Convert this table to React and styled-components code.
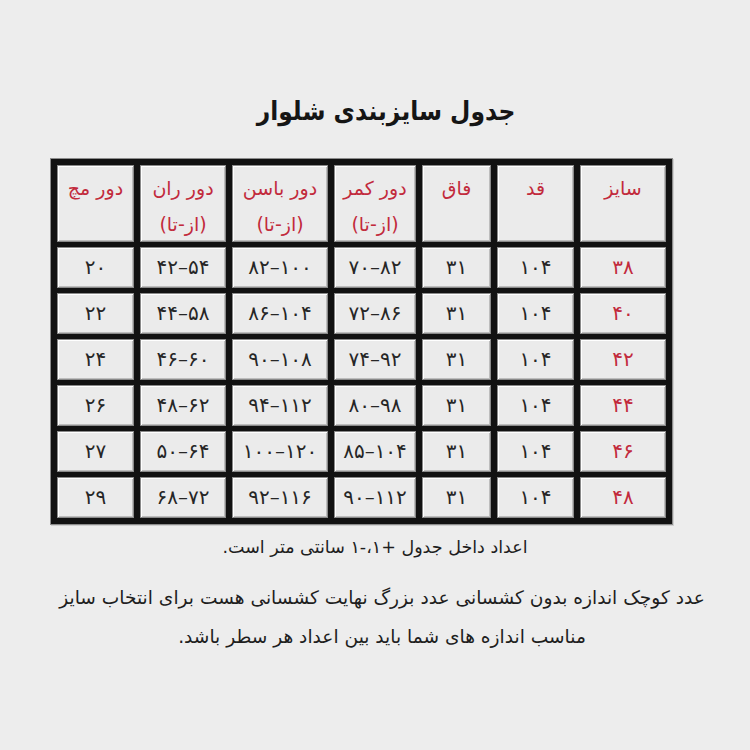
import React from 'react';
import styled, { createGlobalStyle } from 'styled-components';

const GlobalStyle = createGlobalStyle`
  html, body {
    margin: 0;
    padding: 0;
    background: #ededed;
  }
  body {
    font-family: "DejaVu Sans", "Noto Sans", sans-serif;
    color: #1e1e1e;
  }
`;

const headers = [
  { title: 'سایز' },
  { title: 'قد' },
  { title: 'فاق' },
  { title: 'دور کمر', range: true },
  { title: 'دور باسن', range: true },
  { title: 'دور ران', range: true },
  { title: 'دور مچ' },
];

const rows = [
  ['۳۸', '۱۰۴', '۳۱', '۷۰–۸۲', '۸۲–۱۰۰', '۴۲–۵۴', '۲۰'],
  ['۴۰', '۱۰۴', '۳۱', '۷۲–۸۶', '۸۶–۱۰۴', '۴۴–۵۸', '۲۲'],
  ['۴۲', '۱۰۴', '۳۱', '۷۴–۹۲', '۹۰–۱۰۸', '۴۶–۶۰', '۲۴'],
  ['۴۴', '۱۰۴', '۳۱', '۸۰–۹۸', '۹۴–۱۱۲', '۴۸–۶۲', '۲۶'],
  ['۴۶', '۱۰۴', '۳۱', '۸۵–۱۰۴', '۱۰۰–۱۲۰', '۵۰–۶۴', '۲۷'],
  ['۴۸', '۱۰۴', '۳۱', '۹۰–۱۱۲', '۹۲–۱۱۶', '۶۸–۷۲', '۲۹'],
];

const App = () => (
  <Page dir="rtl">
    <GlobalStyle />
    <Title>جدول سایزبندی شلوار</Title>
    <Table>
      {headers.map((h) => (
        <HeadCell key={h.title}>
          <span>{h.title}</span>
          {h.range && <span>(از-تا)</span>}
        </HeadCell>
      ))}
      {rows.map((row) =>
        row.map((value, i) => (
          <Cell key={row[0] + i} $red={i === 0}>
            {value}
          </Cell>
        ))
      )}
    </Table>
    <Note>اعداد داخل جدول +۱،-۱ سانتی متر است.</Note>
    <Hint>
      عدد کوچک اندازه بدون کشسانی عدد بزرگ نهایت کشسانی هست برای انتخاب سایز
      <br />
      مناسب اندازه های شما باید بین اعداد هر سطر باشد.
    </Hint>
  </Page>
);
export default App;

const red = '#c22a3c';

const Page = styled.div`
  width: 750px;
  height: 750px;
  display: flex;
  flex-direction: column;
  align-items: center;
  box-sizing: border-box;
  padding-top: 90px;
`;

const Title = styled.h1`
  margin: 0 0 0 22px;
  font-family: "DejaVu Sans Condensed", "DejaVu Sans", sans-serif;
  font-stretch: condensed;
  font-size: 26px;
  font-weight: bold;
  line-height: 42px;
  color: #151515;
`;

const Table = styled.div`
  margin-top: 26px;
  margin-right: 27px;
  display: grid;
  grid-template-columns: 86px 77px 69px 82px 96px 86px 77px;
  grid-template-rows: 77px repeat(6, 41px);
  column-gap: 6px;
  row-gap: 5px;
  padding: 6px;
  background: #121212;
  border: 1px solid #8c8c8c;
  box-shadow: 1px 1px 0 #cfcfcf;
`;

const CellBase = styled.div`
  box-sizing: border-box;
  background: #ebebeb;
  border: 1px solid #8a8a8a;
  box-shadow: inset 1px 1px 0 #ffffff, inset -1px -1px 0 #bdbdbd;
  display: flex;
  flex-direction: column;
  align-items: center;
`;

const HeadCell = styled(CellBase)`
  justify-content: flex-start;
  padding-top: 8px;
  gap: 7px;
  color: ${red};
  font-size: 19px;
  line-height: 29px;
`;

const Cell = styled(CellBase)`
  justify-content: center;
  direction: ltr;
  color: ${(p) => (p.$red ? red : '#262626')};
  font-size: 20px;
  letter-spacing: 2px;
  padding-bottom: 2px;
`;

const Note = styled.p`
  margin: 9px 0 0;
  font-size: 17.5px;
  line-height: 26px;
  color: #1e1e1e;
`;

const Hint = styled.p`
  margin: 18px 0 0 14px;
  font-size: 18.6px;
  line-height: 39px;
  text-align: center;
  color: #1e1e1e;
`;
